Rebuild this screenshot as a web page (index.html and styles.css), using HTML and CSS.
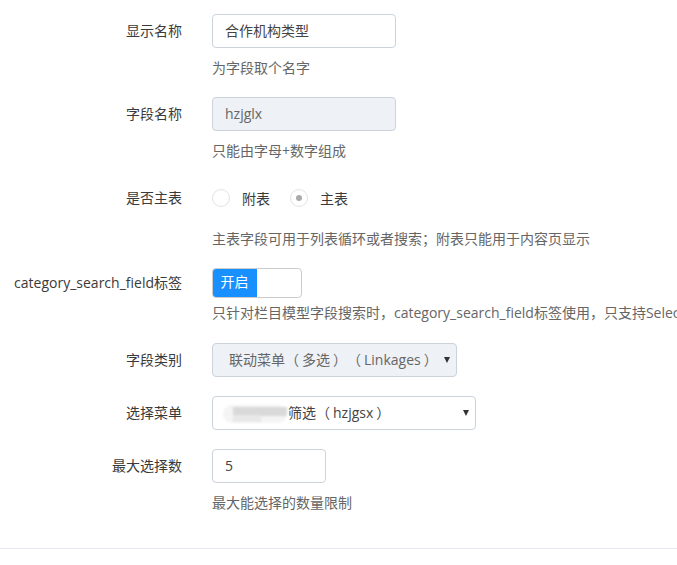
FILE: index.html
```html
<!DOCTYPE html>
<html lang="zh-CN">
<head>
<meta charset="utf-8">
<title>字段设置</title>
<link rel="stylesheet" href="styles.css">
</head>
<body>
<form class="form">
  <div class="row row-first">
    <label class="label">显示名称</label>
    <div class="body">
      <div class="input w184">合作机构类型</div>
      <div class="help">为字段取个名字</div>
    </div>
  </div>
  <div class="row">
    <label class="label">字段名称</label>
    <div class="body">
      <div class="input w184 disabled">hzjglx</div>
      <div class="help">只能由字母+数字组成</div>
    </div>
  </div>
  <div class="row row-radio">
    <label class="label">是否主表</label>
    <div class="body">
      <div class="radios">
        <span class="radio"><span class="circle"></span><span class="rtext">附表</span></span>
        <span class="radio"><span class="circle checked"></span><span class="rtext">主表</span></span>
      </div>
      <div class="help help-radio">主表字段可用于列表循环或者搜索；附表只能用于内容页显示</div>
    </div>
  </div>
  <div class="row row-switch">
    <label class="label">category_search_field标签</label>
    <div class="body">
      <div class="switch"><span class="on">开启</span><span class="off"></span></div>
      <div class="help help-switch">只针对栏目模型字段搜索时，category_search_field标签使用，只支持Select类型的字段</div>
    </div>
  </div>
  <div class="row">
    <label class="label">字段类别</label>
    <div class="body">
      <div class="select w244 disabled"><span class="stext">联动菜单<span class="lp">（</span>多选<span class="rp">）</span><span class="lp">（</span>Linkages<span class="rp">）</span></span><span class="arrow"></span></div>
    </div>
  </div>
  <div class="row">
    <label class="label">选择菜单</label>
    <div class="body">
      <div class="select w263"><span class="stext"><span class="blur"><i class="b1"></i><i class="b2"></i><i class="b3"></i></span>筛选<span class="lp">（</span>hzjgsx<span class="rp">）</span></span><span class="arrow"></span></div>
    </div>
  </div>
  <div class="row row-last">
    <label class="label">最大选择数</label>
    <div class="body">
      <div class="input w113">5</div>
      <div class="help">最大能选择的数量限制</div>
    </div>
  </div>
</form>
<div class="divider"></div>
</body>
</html>
```

FILE: styles.css
```css
html, body {
  margin: 0;
  padding: 0;
  background: #fff;
}
body {
  font-family: "Open Sans", "Noto Sans CJK SC", sans-serif;
  font-size: 14px;
  color: #333;
  width: 677px;
  overflow: hidden;
}
.form {
  padding-top: 14px;
}
.row {
  display: flex;
  align-items: flex-start;
  margin-bottom: 19px;
  white-space: nowrap;
}
.label {
  width: 182px;
  flex: none;
  text-align: right;
  line-height: 34px;
  color: #3a3a3a;
}
.body {
  margin-left: 30px;
  flex: 1;
  min-width: 0;
}
.input, .select {
  box-sizing: border-box;
  height: 34px;
  line-height: 32px;
  border: 1px solid #ccd3dd;
  border-radius: 4px;
  padding: 0 12px;
  color: #444;
  background: #fff;
}
.w184 { width: 184px; }
.w113 { width: 114px; }
.w244 { width: 245px; }
.w263 { width: 264px; }
.disabled {
  background: #eef1f6;
  color: #666;
}
.help {
  margin-top: 10px;
  line-height: 20px;
  color: #666;
}
.row-radio .label { line-height: 36px; }
.radios {
  display: flex;
  align-items: center;
  height: 36px;
}
.radio {
  display: flex;
  align-items: center;
  margin-right: 20px;
}
.circle {
  box-sizing: border-box;
  width: 18px;
  height: 18px;
  border: 1px solid #e3e3e3;
  border-radius: 50%;
  display: flex;
  align-items: center;
  justify-content: center;
}
.circle.checked::after {
  content: "";
  width: 6px;
  height: 6px;
  border-radius: 50%;
  background: #aaa;
}
.rtext {
  margin-left: 12px;
  color: #3a3a3a;
}
.help-radio { margin-top: 13px; }
.row-switch { margin-bottom: 20px; }
.row-switch .label { line-height: 29px; }
.switch {
  box-sizing: border-box;
  width: 90px;
  height: 30px;
  border: 1px solid #cccccc;
  border-radius: 4px;
  display: flex;
  overflow: hidden;
}
.switch .on {
  width: 45px;
  height: 30px;
  margin: -1px 0 -1px -1px;
  background: #1890ff;
  color: #fff;
  text-align: center;
  line-height: 28px;
  border-radius: 4px 0 0 4px;
}
.switch .off { flex: 1; }
.help-switch { margin-top: 5px; }
.select {
  display: flex;
  align-items: center;
  padding: 0 6px 0 16px;
}
.stext {
  flex: 1;
  display: flex;
  align-items: center;
}
.lp { margin-right: 3px; }
.rp { margin-left: 3px; }
.arrow {
  width: 0;
  height: 0;
  border-left: 3.5px solid transparent;
  border-right: 3.5px solid transparent;
  border-top: 6px solid #333;
}
.w263 .stext { margin-left: -6px; }
.blur {
  position: relative;
  display: inline-block;
  width: 65px;
  height: 19px;
  filter: blur(1.2px);
}
.blur i {
  position: absolute;
  display: block;
}
.blur .b1 { left: 0; top: 1px; width: 64px; height: 18px; border-radius: 9px; background: #f4f4f4; }
.blur .b2 { left: 10px; top: 3px; width: 54px; height: 9px; background: #d9d9d9; }
.blur .b3 { left: 10px; top: 11px; width: 28px; height: 7px; background: #e8e8e8; }
.row-last { margin-bottom: 0; }
.divider {
  margin-top: 35px;
  height: 1px;
  background: #e6eaf0;
}
```
